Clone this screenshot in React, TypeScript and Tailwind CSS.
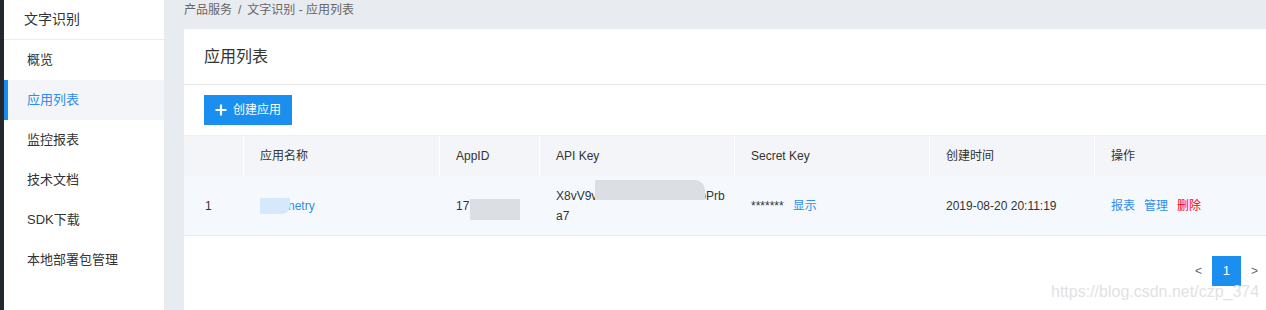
import React from "react";

const font = { fontFamily: '"Liberation Sans", "Noto Sans CJK SC", sans-serif' };

const menu = ["概览", "应用列表", "监控报表", "技术文档", "SDK下载", "本地部署包管理"];

export default function App() {
  return (
    <div className="relative flex h-[310px] w-[1266px] overflow-hidden bg-[#e8ebef] text-[#333]" style={font}>
      <div className="w-[4px] shrink-0 bg-[#25272e]" />
      <aside className="flex w-[160px] shrink-0 flex-col bg-white">
        <div className="flex h-[40px] items-center border-b border-[#e9ecf0] pl-[20px] text-[14px] text-[#333]">文字识别</div>
        {menu.map((m, i) => (
          <div
            key={m}
            className={
              i === 1
                ? "flex h-[40px] items-center border-l-4 border-[#1a8bef] bg-[#f4f5f8] pl-[19px] text-[13px] text-[#2f8cf0]"
                : "flex h-[40px] items-center pl-[23px] text-[13px] text-[#333]"
            }
          >
            {m}
          </div>
        ))}
      </aside>
      <main className="flex flex-1 flex-col pl-[20px]">
        <div className="flex h-[29px] items-start pt-[1px] text-[12px] text-[#666]">
          <span>产品服务</span>
          <span className="mx-[6px]">/</span>
          <span>文字识别 - 应用列表</span>
        </div>
        <div className="flex flex-1 flex-col bg-white">
          <div className="flex h-[56px] items-center border-b border-[#e4e8ec] pl-[20px] text-[16px] text-[#333]">应用列表</div>
          <div className="pl-[20px] pt-[10px]">
            <button className="flex h-[30px] w-[88px] items-center justify-center gap-[6px] bg-[#1a8ff0] text-[12px] text-white">
              <svg width="12" height="12" viewBox="0 0 12 12">
                <path d="M6 0.5v11M0.5 6h11" stroke="white" strokeWidth="2.2" />
              </svg>
              <span>创建应用</span>
            </button>
          </div>
          <div className="mt-[10px] border-t border-[#eef0f3]">
            <div className="grid h-[40px] grid-cols-[60px_196px_100px_195px_195px_165px_1fr] bg-[#f4f5f8] text-[12px] text-[#333]">
              <div className="border-r border-white" />
              <div className="flex items-center border-r border-white pl-[16px]">应用名称</div>
              <div className="flex items-center border-r border-white pl-[16px]">AppID</div>
              <div className="flex items-center border-r border-white pl-[16px]">API Key</div>
              <div className="flex items-center border-r border-white pl-[16px]">Secret Key</div>
              <div className="flex items-center border-r border-white pl-[16px]">创建时间</div>
              <div className="flex items-center pl-[16px]">操作</div>
            </div>
            <div className="grid h-[60px] grid-cols-[60px_196px_100px_195px_195px_165px_1fr] border-b border-[#e8edf3] bg-[#f5f9fe] text-[12px] text-[#333]">
              <div className="flex items-center pl-[21px]">1</div>
              <div className="relative flex items-center pl-[16px]">
                <span className="pl-[28px] text-[#2f8cf0]">netry</span>
                <span className="absolute left-[16px] top-[22px] h-[16px] w-[30px] rounded-br-[8px] bg-[#d6e9fb]" />
              </div>
              <div className="relative flex items-center pl-[16px]">
                <span>17</span>
                <span className="absolute left-[30px] top-[23px] h-[21px] w-[50px] bg-[#dbdee2]" />
              </div>
              <div className="relative flex flex-col justify-center pl-[16px] leading-[20px]">
                <span>X8vV9vc<span className="inline-block w-[96px]" />oPrb</span>
                <span>a7</span>
                <span className="absolute left-[55px] top-[4px] h-[20px] w-[110px] rounded-tr-[10px] bg-[#dbdee2]" />
              </div>
              <div className="flex items-center pl-[16px]">
                <span>*******</span>
                <span className="ml-[9px] text-[#2f8cf0]">显示</span>
              </div>
              <div className="flex items-center pl-[16px]">2019-08-20 20:11:19</div>
              <div className="flex items-center gap-[9px] pl-[16px]">
                <span className="text-[#2f8cf0]">报表</span>
                <span className="text-[#2f8cf0]">管理</span>
                <span className="text-[#f00]">删除</span>
              </div>
            </div>
          </div>
          <div className="flex items-center justify-end pr-[8px] pt-[20px] text-[12px]">
            <span className="mr-[10px] text-[#666]">&lt;</span>
            <span className="flex h-[30px] w-[29px] items-center justify-center bg-[#1a8ff0] text-[13px] text-white">1</span>
            <span className="ml-[10px] text-[#666]">&gt;</span>
          </div>
        </div>
      </main>
      <div className="pointer-events-none absolute left-[1051px] top-[282px] text-[16px] leading-[20px] text-[#e2e2e2]">https://blog.csdn.net/czp_374</div>
    </div>
  );
}
